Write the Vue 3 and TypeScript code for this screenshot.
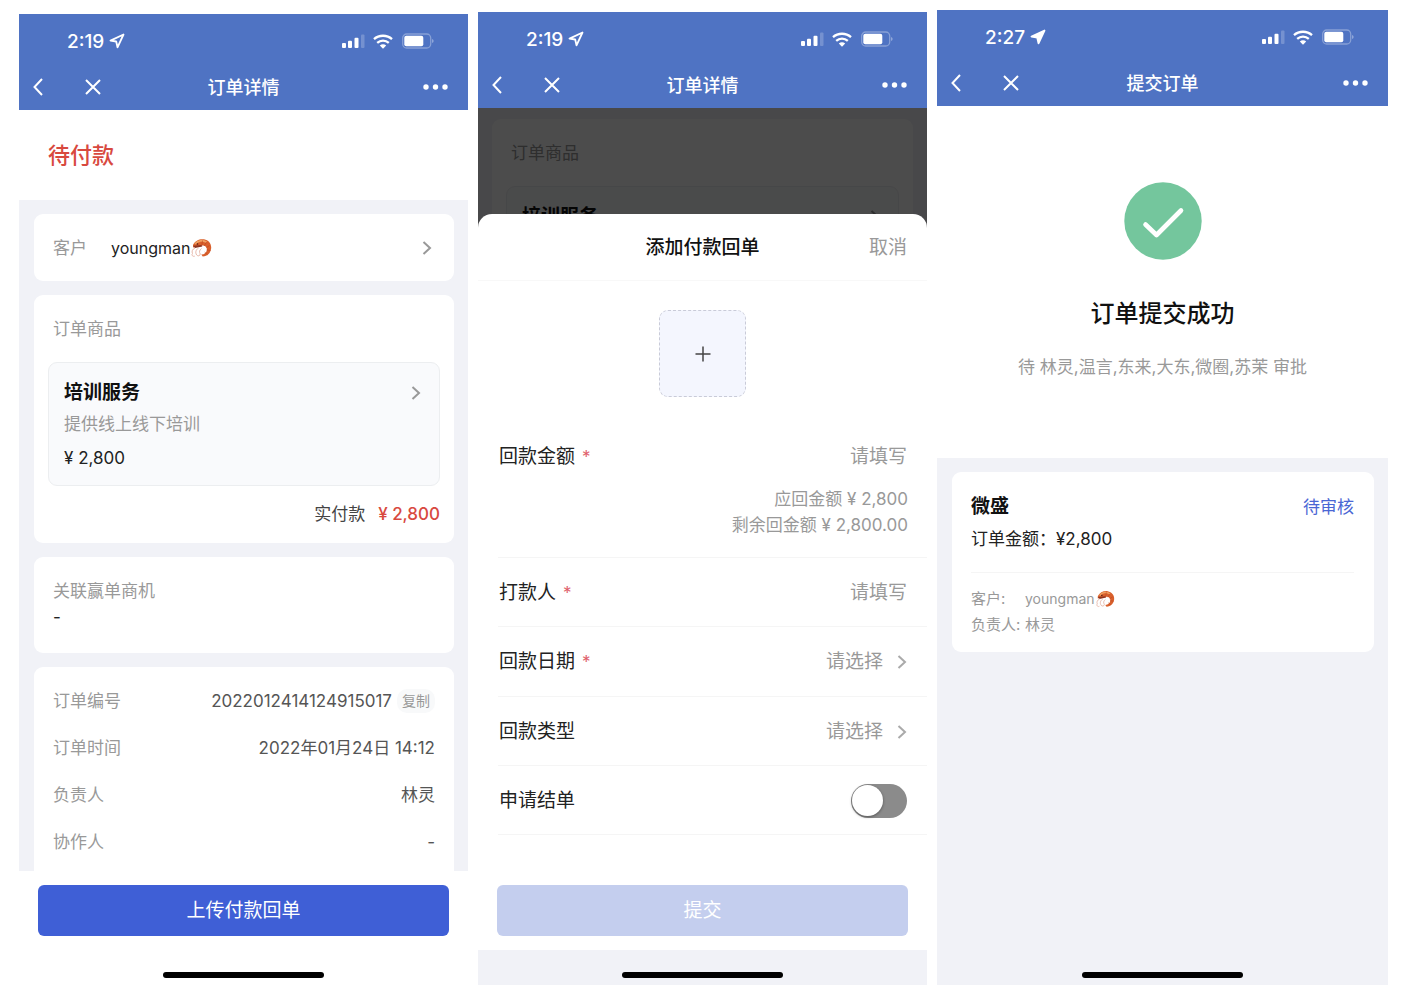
<script setup lang="ts">
import { reactive } from 'vue'

interface Phone {
  id: 'detail' | 'receipt' | 'done'
  time: string
  title: string
  solidArrow: boolean
}

const phones: Phone[] = [
  { id: 'detail', time: '2:19', title: '订单详情', solidArrow: false },
  { id: 'receipt', time: '2:19', title: '订单详情', solidArrow: false },
  { id: 'done', time: '2:27', title: '提交订单', solidArrow: true },
]

interface InfoRow {
  label: string
  value: string
  copy?: boolean
}

const orderInfo: InfoRow[] = [
  { label: '订单编号', value: '2022012414124915017', copy: true },
  { label: '订单时间', value: '2022年01月24日 14:12' },
  { label: '负责人', value: '林灵' },
  { label: '协作人', value: '-' },
]

const form = reactive({ amount: '', payer: '', date: '', kind: '', close: false })
</script>

<template>
  <svg class="defs" width="0" height="0" aria-hidden="true">
    <symbol id="shrimp" viewBox="0 0 22 20">
      <path d="M3 7C5 2.500 10 .6 14 1.300c4.500.8 7.400 4.200 7.200 8.700-.2 4.700-3.700 8.400-8.500 8.600l-1.400-2c3.400-.3 5.400-2.200 5.600-4.900.2-2.400-1.500-4-4-4.200L8 8.200 3 9.500z" fill="#d9602c" />
      <path d="M5 6C8 2.300 13 1.800 16.500 4.300" fill="none" stroke="#f0a060" stroke-width="1.800" />
      <path d="M12.500 2.500l-.6 4.500M16.500 4l-2.300 4M19.500 7.500l-3.300 2.300M20.500 12.500l-3.800-.7M17.500 16.800l-2.800-2.700" stroke="#b8441f" stroke-width=".6" />
      <path d="M3 7.800l8.500-.8.8 1.400L5 10z" fill="#8e3420" />
      <path d="M5 10c-2.500 1-3.600 3.600-2.500 5.500M8.500 10c-2.700 1.800-3.500 4.500-1.800 7M11.500 10.500c-2 1.500-2.700 3.500-1.200 5.500M2.500 15.500c-1.500 1.500.5 3.500 2.300 2.600M6.700 17c1.300 1.500 3.300 1 3.600-1" fill="none" stroke="#e4b0a0" stroke-width=".9" />
      <circle cx="7.500" cy="6" r=".8" fill="#4c1a14" />
    </symbol>
    <symbol id="chevron" viewBox="0 0 10 16">
      <path d="M1.500 2l6.500 6-6.500 6" fill="none" stroke="currentColor" stroke-width="2" />
    </symbol>
  </svg>

  <main class="board">
    <section v-for="p in phones" :key="p.id" class="phone" :class="p.id">
      <header class="top">
        <div class="status">
          <span class="time">{{ p.time }}</span>
          <svg class="arrow" width="16" height="16" viewBox="0 0 16 16">
            <path d="M14.500 1.500L1.500 7.600l5.700.9 1.300 5.800z" :fill="p.solidArrow ? '#fff' : 'none'" stroke="#fff" stroke-width="1.800" stroke-linejoin="round" />
          </svg>
          <svg class="signal" width="23" height="14" viewBox="0 0 23 14" fill="#fff">
            <rect x="0" y="9" width="4" height="5" rx="1" />
            <rect x="6" y="6.800" width="4" height="7.200" rx="1" />
            <rect x="12.500" y="3.800" width="4" height="10.200" rx="1" />
            <rect x="19" y=".5" width="3.500" height="13.500" rx="1" opacity=".22" />
          </svg>
          <svg class="wifi" width="20" height="15" viewBox="0 0 20 15">
            <path d="M1 5.200c5-4.600 13-4.600 18 0M4.200 8.800c3.300-3 8.300-3 11.600 0" fill="none" stroke="#fff" stroke-width="2.300" />
            <path d="M6.800 11.400c1.800-1.600 4.600-1.600 6.400 0L10 14.700z" fill="#fff" />
          </svg>
          <svg width="32" height="16" viewBox="0 0 32 16">
            <rect x=".7" y="1" width="28" height="14" rx="4" fill="none" stroke="#fff" stroke-opacity=".32" stroke-width="1.300" />
            <rect x="2.300" y="2.700" width="19" height="10.600" rx="2" fill="#fff" />
            <path d="M30.200 6v4c1.800-.8 1.800-3.200 0-4z" fill="#fff" fill-opacity=".45" />
          </svg>
        </div>
        <nav class="nav">
          <div class="nav-left">
            <button type="button" class="icon" aria-label="返回">
              <svg width="10" height="18" viewBox="0 0 10 18"><path d="M9 1L1.500 9 9 17" fill="none" stroke="#fff" stroke-width="2" /></svg>
            </button>
            <button type="button" class="icon" aria-label="关闭">
              <svg width="16" height="16" viewBox="0 0 16 16"><path d="M1 1l14 14M15 1L1 15" fill="none" stroke="#fff" stroke-width="2" /></svg>
            </button>
          </div>
          <h1>{{ p.title }}</h1>
          <button type="button" class="icon more" aria-label="更多">
            <svg width="25" height="6" viewBox="0 0 25 6" fill="#fff"><circle cx="3" cy="3" r="2.700" /><circle cx="12.500" cy="3" r="2.700" /><circle cx="22" cy="3" r="2.700" /></svg>
          </button>
        </nav>
      </header>

      <template v-if="p.id === 'detail'">
        <div class="state">待付款</div>
        <div class="cards">
          <a class="card customer" href="#">
            <span class="muted">客户</span>
            <span class="who">youngman<svg width="22" height="20"><use href="#shrimp" /></svg></span>
            <svg class="go" width="10" height="16"><use href="#chevron" /></svg>
          </a>
          <div class="card goods">
            <div class="goods-label">订单商品</div>
            <a class="product" href="#">
              <span class="product-head"><strong>培训服务</strong><svg class="go" width="10" height="16"><use href="#chevron" /></svg></span>
              <span class="muted">提供线上线下培训</span>
              <span class="price">¥ 2,800</span>
            </a>
            <div class="paid"><span>实付款</span><b>¥ 2,800</b></div>
          </div>
          <div class="card linked">
            <span class="muted">关联赢单商机</span>
            <span>-</span>
          </div>
          <dl class="card info">
            <div v-for="row in orderInfo" :key="row.label">
              <dt>{{ row.label }}</dt>
              <dd>{{ row.value }}<button v-if="row.copy" type="button" class="copy">复制</button></dd>
            </div>
          </dl>
        </div>
        <div class="action"><button type="button" class="primary">上传付款回单</button></div>
      </template>

      <template v-else-if="p.id === 'receipt'">
        <div class="behind">
          <div class="card goods">
            <div class="goods-label">订单商品</div>
            <div class="product">
              <span class="product-head"><strong>培训服务</strong><svg class="go" width="10" height="16"><use href="#chevron" /></svg></span>
            </div>
          </div>
          <div class="mask"></div>
        </div>
        <form class="sheet" @submit.prevent>
          <div class="sheet-head">
            <h2>添加付款回单</h2>
            <button type="button" class="cancel">取消</button>
          </div>
          <button type="button" class="upload" aria-label="上传">
            <svg width="16" height="16" viewBox="0 0 16 16"><path d="M8 .5v15M.5 8h15" stroke="#444" stroke-width="1.500" /></svg>
          </button>
          <div class="amount">
            <div class="line">
              <label for="amount">回款金额<i>*</i></label>
              <input id="amount" v-model="form.amount" type="text" placeholder="请填写" />
            </div>
            <p>应回金额 ¥ 2,800</p>
            <p>剩余回金额 ¥ 2,800.00</p>
          </div>
          <div class="rows">
            <div class="line">
              <label for="payer">打款人<i>*</i></label>
              <input id="payer" v-model="form.payer" type="text" placeholder="请填写" />
            </div>
            <div class="line">
              <label for="date">回款日期<i>*</i></label>
              <select id="date" v-model="form.date"><option value="">请选择</option></select>
              <svg class="go" width="10" height="16"><use href="#chevron" /></svg>
            </div>
            <div class="line">
              <label for="kind">回款类型</label>
              <select id="kind" v-model="form.kind"><option value="">请选择</option></select>
              <svg class="go" width="10" height="16"><use href="#chevron" /></svg>
            </div>
            <div class="line">
              <label for="close">申请结单</label>
              <input id="close" v-model="form.close" type="checkbox" class="switch" />
            </div>
          </div>
          <div class="submit"><button type="submit" class="primary" disabled>提交</button></div>
        </form>
      </template>

      <template v-else>
        <div class="success">
          <svg width="78" height="78" viewBox="0 0 78 78">
            <circle cx="39" cy="39" r="38.700" fill="#74c69d" />
            <path d="M21.500 42.500l11 10.500L57 28.500" fill="none" stroke="#fff" stroke-width="4.600" stroke-linecap="round" stroke-linejoin="round" />
          </svg>
          <h2>订单提交成功</h2>
          <p>待 林灵,温言,东来,大东,微圈,苏茉 审批</p>
        </div>
        <div class="cards">
          <div class="card summary">
            <div class="summary-head"><strong>微盛</strong><span>待审核</span></div>
            <div class="sum">订单金额：¥2,800</div>
            <dl>
              <dt>客户:</dt>
              <dd><span class="small-name">youngman</span><svg width="20" height="18"><use href="#shrimp" /></svg></dd>
              <dt>负责人:</dt>
              <dd>林灵</dd>
            </dl>
          </div>
        </div>
      </template>

      <div class="home"><span></span></div>
    </section>
  </main>
</template>

<style>
body {
  background: #fff;
}
</style>

<style scoped>
.board,
.board * {
  box-sizing: border-box;
}
.defs {
  position: absolute;
}
.board {
  display: grid;
  grid-template-columns: 449fr 449fr 451fr;
  gap: 10px;
  min-height: 100vh;
  padding: 10px 30px 13px 19px;
  font-family: Inter, "Noto Sans CJK SC", sans-serif;
  font-size: 17px;
  line-height: 26px;
  color: #222;
}
.phone {
  display: flex;
  flex-direction: column;
  min-width: 0;
}
.detail {
  margin-top: 4px;
}
.receipt {
  margin-top: 2px;
}
.receipt,
.done {
  background: #f1f2f7;
}
button,
input,
select {
  font: inherit;
  color: inherit;
  background: none;
  border: 0;
  padding: 0;
  margin: 0;
}
h1,
h2,
p,
dl,
dd {
  margin: 0;
}
a {
  color: inherit;
  text-decoration: none;
}
svg {
  display: block;
  flex: none;
}
.muted,
dt {
  color: #999;
}
.go {
  color: #999;
  margin-left: auto;
}

.top {
  background: #4f73c3;
  color: #fff;
  padding-bottom: 4px;
}
.status {
  display: flex;
  align-items: center;
  height: 54px;
  padding: 0 34px 0 48px;
}
.time {
  padding-top: 1px;
  font-size: 19px;
  font-weight: 500;
}
.arrow {
  margin-left: 5px;
}
.signal {
  margin-left: auto;
}
.wifi {
  margin: 0 9px 0 8px;
}
.nav {
  display: grid;
  grid-template-columns: 1fr auto 1fr;
  align-items: center;
  height: 38px;
  padding: 0 14px;
}
.nav-left {
  display: flex;
  align-items: center;
  gap: 42px;
}
.nav h1 {
  padding-top: 1px;
  font-size: 18px;
  font-weight: 500;
}
.more {
  justify-self: end;
  margin-right: 6px;
}

.state {
  padding: 32px 29px;
  font-size: 22px;
  font-weight: 500;
  color: #d8493f;
}
.cards {
  flex: 1;
  display: flex;
  flex-direction: column;
  gap: 14px;
  padding: 14px 14px 0 15px;
  background: #f1f2f7;
}
.card {
  background: #fff;
  border-radius: 9px;
}
.customer {
  display: flex;
  align-items: center;
  height: 67px;
  padding: 0 22px 0 19px;
}
.who {
  display: flex;
  align-items: center;
  margin-left: 24px;
  font-size: 16px;
}
.goods {
  padding: 21px 14px 16px;
}
.goods-label {
  padding: 0 5px;
  color: #999;
}
.product {
  display: flex;
  flex-direction: column;
  margin-top: 20px;
  padding: 16px 15px 10px;
  background: #f9fafc;
  border: 1px solid #eceef0;
  border-radius: 9px;
}
.product-head {
  display: flex;
  align-items: center;
  height: 28px;
  padding-right: 3px;
}
.product strong,
.summary strong {
  font-size: 19px;
  font-weight: 600;
  color: #111;
}
.product .muted {
  line-height: 34px;
}
.price {
  line-height: 34px;
}
.paid {
  display: flex;
  justify-content: flex-end;
  gap: 13px;
  margin-top: 15px;
  color: #444;
}
.paid b {
  font-weight: 500;
  color: #d8493f;
}
.linked {
  display: flex;
  flex-direction: column;
  height: 96px;
  padding: 21px 19px;
}
.info {
  flex: 1;
  padding: 10px 19px 0;
  border-radius: 9px 9px 0 0;
}
.info div {
  display: flex;
  align-items: center;
  justify-content: space-between;
  height: 47px;
}
.info dd {
  display: flex;
  align-items: center;
  gap: 5px;
  color: #555;
}
.copy {
  padding: 0 5px;
  font-size: 14px;
  line-height: 24px;
  color: #999;
  background: #f8f9fa;
  border-radius: 10px;
}
.action {
  padding: 14px 19px;
}
.primary {
  display: block;
  width: 100%;
  height: 51px;
  font-size: 19px;
  color: #fff;
  background: #3f5fd6;
  border-radius: 6px;
}
.primary:disabled {
  background: #c4ceee;
}
.home {
  display: flex;
  justify-content: center;
  padding: 22px 0 7px;
}
.home span {
  width: 161px;
  height: 6px;
  background: #000;
  border-radius: 3px;
}

.behind {
  position: relative;
  height: 120px;
  padding: 11px 14px 0;
  overflow: hidden;
}
.mask {
  position: absolute;
  inset: 0;
  background: rgba(0, 0, 0, 0.7);
}
.sheet {
  position: relative;
  flex: 1;
  display: flex;
  flex-direction: column;
  margin-top: -14px;
  background: #fff;
  border-radius: 14px 14px 0 0;
}
.sheet-head {
  display: grid;
  grid-template-columns: 1fr auto 1fr;
  align-items: center;
  height: 67px;
  padding: 2px 20px 0;
  border-bottom: 1px solid #f8f8f8;
  font-size: 19px;
}
.sheet-head h2 {
  grid-column: 2;
  font-size: inherit;
  font-weight: 500;
  color: #111;
}
.cancel {
  justify-self: end;
  color: #999;
}
.upload {
  display: grid;
  place-items: center;
  align-self: center;
  width: 87px;
  height: 87px;
  margin: 29px 0 47px;
  background: #f4f6fe;
  border: 1px dashed #c9cbd8;
  border-radius: 9px;
}
.line {
  display: flex;
  align-items: center;
  padding: 2px 20px 0 1px;
  font-size: 19px;
}
.line i {
  margin-left: 7px;
  font-style: normal;
  font-size: 17px;
  color: #e0606a;
}
.line input[type='text'] {
  flex: 1;
  min-width: 0;
  text-align: right;
}
.line input::placeholder {
  color: #999;
  opacity: 1;
}
.line select {
  flex: 1;
  appearance: none;
  text-align: right;
  text-align-last: right;
  color: #999;
}
.line .go {
  margin-left: 14px;
  color: #aaa;
}
.amount {
  margin-left: 20px;
  padding-bottom: 19px;
  border-bottom: 1px solid #f5f5f5;
}
.amount .line {
  height: 24px;
  margin-bottom: 18px;
}
.amount p {
  padding-right: 19px;
  text-align: right;
  color: #999;
}
.rows {
  flex: 1;
  display: flex;
  flex-direction: column;
  margin-left: 20px;
}
.rows .line {
  flex: 1;
  min-height: 56px;
  border-bottom: 1px solid #f5f5f5;
}
.switch {
  appearance: none;
  width: 56px;
  height: 34px;
  margin-left: auto;
  background: #8b8b8b;
  border-radius: 17px;
}
.switch::before {
  content: '';
  display: block;
  width: 31px;
  height: 31px;
  margin: 1px;
  background: #fff;
  border-radius: 50%;
  box-shadow: 0 1px 3px rgba(0, 0, 0, 0.4);
}
.switch:checked {
  background: #3f5fd6;
}
.switch:checked::before {
  margin-left: 24px;
}
.submit {
  padding: 50px 19px 14px;
}

.success {
  display: flex;
  flex-direction: column;
  align-items: center;
  padding: 76px 20px 78px;
  background: #fff;
}
.success h2 {
  margin-top: 36px;
  font-size: 24px;
  line-height: 36px;
  font-weight: 500;
  color: #111;
}
.success p {
  margin-top: 22px;
  color: #999;
}
.summary {
  padding: 21px 20px 14px 19px;
}
.summary-head {
  display: flex;
  align-items: center;
  justify-content: space-between;
  height: 28px;
}
.summary-head span {
  color: #4a66d4;
}
.sum {
  margin-top: 5px;
  padding-bottom: 20px;
  border-bottom: 1px solid #f5f5f5;
}
.summary dl {
  display: grid;
  grid-template-columns: 54px 1fr;
  padding-top: 13px;
  font-size: 15px;
  color: #999;
}
.summary dd {
  display: flex;
  align-items: center;
}
.small-name {
  font-size: 14px;
}
</style>
